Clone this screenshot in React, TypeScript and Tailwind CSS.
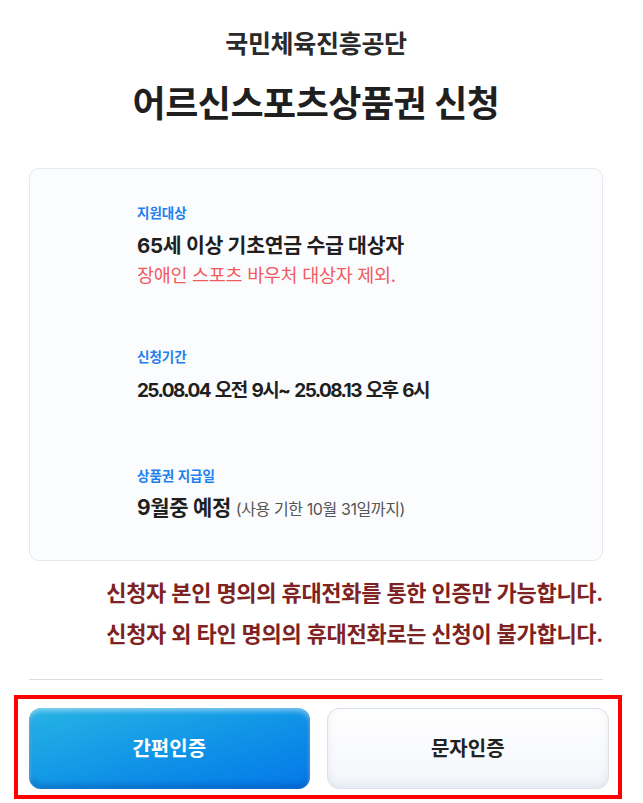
const FONT = "font-['Inter','Noto_Sans_CJK_KR',sans-serif]";

export default function App() {
  return (
    <div className={`${FONT} min-h-[803px] w-[643px] bg-white text-[#222]`}>
      <div className="ml-[29px] w-[574px] pt-[29px]">
        <h2 className="text-center text-[25px] leading-[30px] font-semibold tracking-[-0.3px] text-[#2a2a2a]">
          국민체육진흥공단
        </h2>
        <h1 className="mt-[23px] text-center text-[36px] leading-[44px] font-bold tracking-[-0.5px] text-[#1f1f1f]">
          어르신스포츠상품권 신청
        </h1>

        {/* info card */}
        <div className="mt-[42px] rounded-[10px] border border-[#e6e8ec] bg-[#fbfcfe] pt-[34px] pb-[37px] pl-[107px]">
          <p className="text-[13.5px] leading-[20px] font-semibold text-[#1e80ef]">지원대상</p>
          <p className="mt-[9px] text-[20.5px] leading-[28px] font-bold tracking-[-0.3px] text-[#1f1f1f]">
            65세 이상 기초연금 수급 대상자
          </p>
          <p className="mt-[2px] text-[18.5px] leading-[26px] tracking-[-0.3px] text-[#f25a5f]">
            장애인 스포츠 바우처 대상자 제외.
          </p>

          <p className="mt-[59px] text-[13.5px] leading-[20px] font-semibold text-[#1e80ef]">신청기간</p>
          <p className="mt-[10px] text-[19px] leading-[28px] font-bold tracking-[-1.6px] [word-spacing:2px] text-[#1f1f1f]">
            25.08.04 오전 9시~ 25.08.13 오후 6시
          </p>

          <p className="mt-[61px] text-[13.5px] leading-[20px] font-semibold text-[#1e80ef]">상품권 지급일</p>
          <p className="mt-[8px] text-[21px] leading-[28px] font-bold tracking-[-0.3px] text-[#1f1f1f]">
            9월중 예정{" "}
            <span className="text-[16px] font-normal tracking-[-0.4px] text-[#555]">
              (사용 기한 10월 31일까지)
            </span>
          </p>
        </div>

        <div className="mt-[12px] text-right text-[22px] leading-[41px] font-semibold tracking-[-0.3px] text-[#7e2222]">
          <p>신청자 본인 명의의 휴대전화를 통한 인증만 가능합니다.</p>
          <p>신청자 외 타인 명의의 휴대전화로는 신청이 불가합니다.</p>
        </div>

        <div className="mt-[24px] h-px bg-[#dcdcdc]" />
      </div>

      {/* auth buttons */}
      <div className="mt-[15px] ml-[14px] flex w-[608px] gap-[17px] border-4 border-[#ff0000] pt-[9px] pr-[9px] pb-[6px] pl-[11px]">
        <button className="flex h-[81px] flex-1 items-center justify-center rounded-[12px] bg-gradient-to-br from-[#27b3e4] to-[#0777e8] text-[20px] font-bold text-white shadow-[inset_0_3px_5px_rgba(255,255,255,0.45),inset_0_-4px_6px_rgba(0,50,140,0.35)]">
          간편인증
        </button>
        <button className="flex h-[81px] flex-1 items-center justify-center rounded-[12px] border border-[#d9e1ec] bg-gradient-to-b from-white to-[#f4f6fb] text-[20px] font-bold text-[#222] shadow-[inset_0_-4px_8px_rgba(180,190,210,0.25)]">
          문자인증
        </button>
      </div>
    </div>
  );
}
